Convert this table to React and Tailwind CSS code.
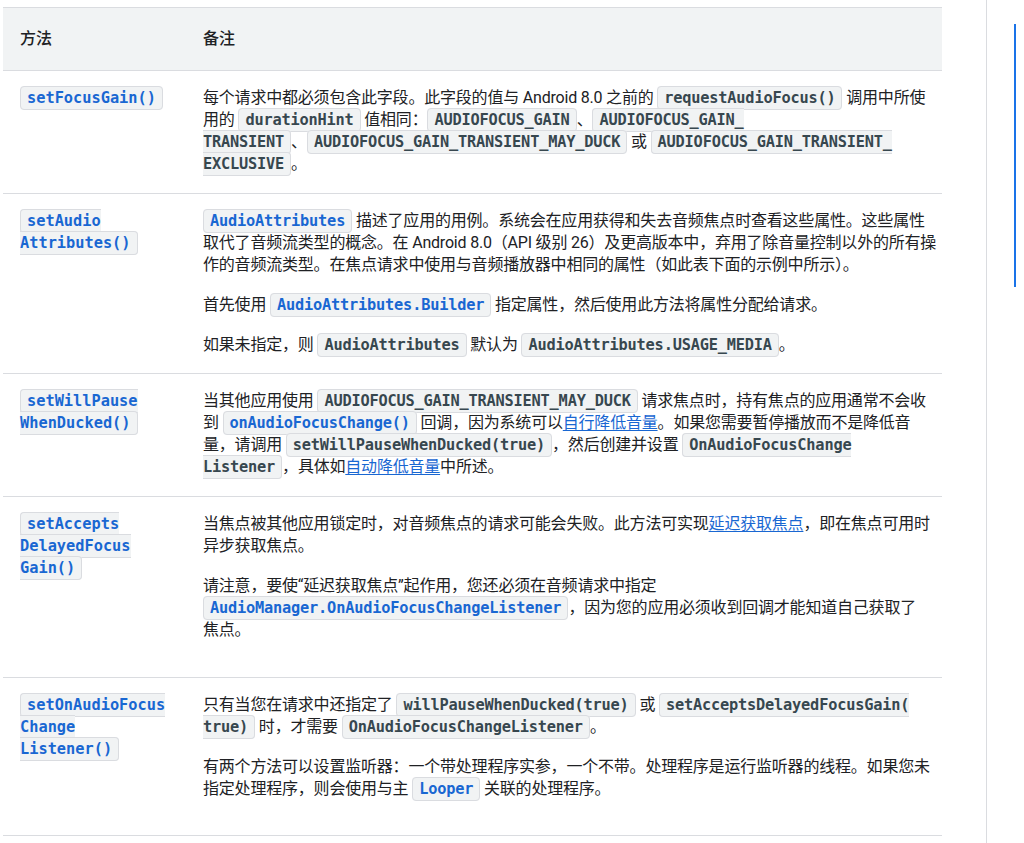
import React from "react";

const body = { fontFamily: 'Roboto, "Noto Sans CJK SC", sans-serif' };
const mono = { fontFamily: '"DejaVu Sans Mono", "Liberation Mono", monospace' };

// inline code chip; blue = linked API name
function C({ children, blue }) {
  return (
    <code
      style={mono}
      className={`text-[15.3px] font-semibold px-[6px] py-[2px] rounded-[4px] border border-[#dadce0] bg-[#f1f3f4] ${
        blue ? "text-[#1967d2]" : "text-[#37474f]"
      }`}
    >
      {children}
    </code>
  );
}

function A({ children }) {
  return <a className="text-[#1967d2] underline underline-offset-2">{children}</a>;
}

function Row({ method, children, pb = "pb-[18px]" }) {
  return (
    <div className="grid grid-cols-[200px_1fr] border-t border-[#dadce0]">
      <div className={`pl-[17px] pr-4 pt-4 ${pb}`}>
        <C blue>{method}</C>
      </div>
      <div className={`pt-4 ${pb} space-y-[18px] whitespace-nowrap tracking-[-0.2px]`}>{children}</div>
    </div>
  );
}

export default function App() {
  return (
    <div style={body} className="flex h-[843px] overflow-hidden bg-white text-[16px] leading-[22px] text-[#202124]">
      <main className="w-[986px] pl-[3px] pt-[7px]">
        <div className="w-[939px] border-b border-[#dadce0]">
          {/* header */}
          <div className="grid grid-cols-[200px_1fr] border-t border-[#dadce0] bg-[#f1f3f4] font-medium">
            <div className="pl-[17px] py-5">方法</div>
            <div className="py-5">备注</div>
          </div>

          <Row method="setFocusGain()">
            <p>
              每个请求中都必须包含此字段。此字段的值与 Android 8.0 之前的 <C>requestAudioFocus()</C> 调用中所使
              <br />
              用的 <C>durationHint</C> 值相同：<C>AUDIOFOCUS_GAIN</C>、<C>AUDIOFOCUS_GAIN_<br />TRANSIENT</C>、
              <C>AUDIOFOCUS_GAIN_TRANSIENT_MAY_DUCK</C> 或 <C>AUDIOFOCUS_GAIN_TRANSIENT_<br />EXCLUSIVE</C>。
            </p>
          </Row>

          <Row method={<>setAudio<br />Attributes()</>} pb="pb-[17px]">
            <p>
              <C blue>AudioAttributes</C> 描述了应用的用例。系统会在应用获得和失去音频焦点时查看这些属性。这些属性
              <br />
              取代了音频流类型的概念。在 Android 8.0（API 级别 26）及更高版本中，弃用了除音量控制以外的所有操
              <br />
              作的音频流类型。在焦点请求中使用与音频播放器中相同的属性（如此表下面的示例中所示）。
            </p>
            <p>
              首先使用 <C blue>AudioAttributes.Builder</C> 指定属性，然后使用此方法将属性分配给请求。
            </p>
            <p>
              如果未指定，则 <C>AudioAttributes</C> 默认为 <C>AudioAttributes.USAGE_MEDIA</C>。
            </p>
          </Row>

          <Row method={<>setWillPause<br />WhenDucked()</>}>
            <p>
              当其他应用使用 <C>AUDIOFOCUS_GAIN_TRANSIENT_MAY_DUCK</C> 请求焦点时，持有焦点的应用通常不会收
              <br />
              到 <C blue>onAudioFocusChange()</C> 回调，因为系统可以<A>自行降低音量</A>。如果您需要暂停播放而不是降低音
              <br />
              量，请调用 <C>setWillPauseWhenDucked(true)</C>，然后创建并设置 <C>OnAudioFocusChange<br />Listener</C>，具体如
              <A>自动降低音量</A>中所述。
            </p>
          </Row>

          <Row method={<>setAccepts<br />DelayedFocus<br />Gain()</>} pb="pb-[36px]">
            <p>
              当焦点被其他应用锁定时，对音频焦点的请求可能会失败。此方法可实现<A>延迟获取焦点</A>，即在焦点可用时
              <br />
              异步获取焦点。
            </p>
            <p>
              请注意，要使“延迟获取焦点”起作用，您还必须在音频请求中指定
              <br />
              <C blue>AudioManager.OnAudioFocusChangeListener</C>，因为您的应用必须收到回调才能知道自己获取了
              <br />
              焦点。
            </p>
          </Row>

          <Row method={<>setOnAudioFocus<br />Change<br />Listener()</>} pb="pb-[35px]">
            <p>
              只有当您在请求中还指定了 <C>willPauseWhenDucked(true)</C> 或 <C>setAcceptsDelayedFocusGain(<br />true)</C> 时，才需要
              {" "}<C>OnAudioFocusChangeListener</C>。
            </p>
            <p>
              有两个方法可以设置监听器：一个带处理程序实参，一个不带。处理程序是运行监听器的线程。如果您未
              <br />
              指定处理程序，则会使用与主 <C blue>Looper</C> 关联的处理程序。
            </p>
          </Row>
        </div>
      </main>

      {/* page outline rail */}
      <aside className="flex-1 border-l border-[#dadce0] pl-[27px] pt-6">
        <div className="w-[2px] h-[263px] bg-[#1a73e8]" />
      </aside>
    </div>
  );
}
